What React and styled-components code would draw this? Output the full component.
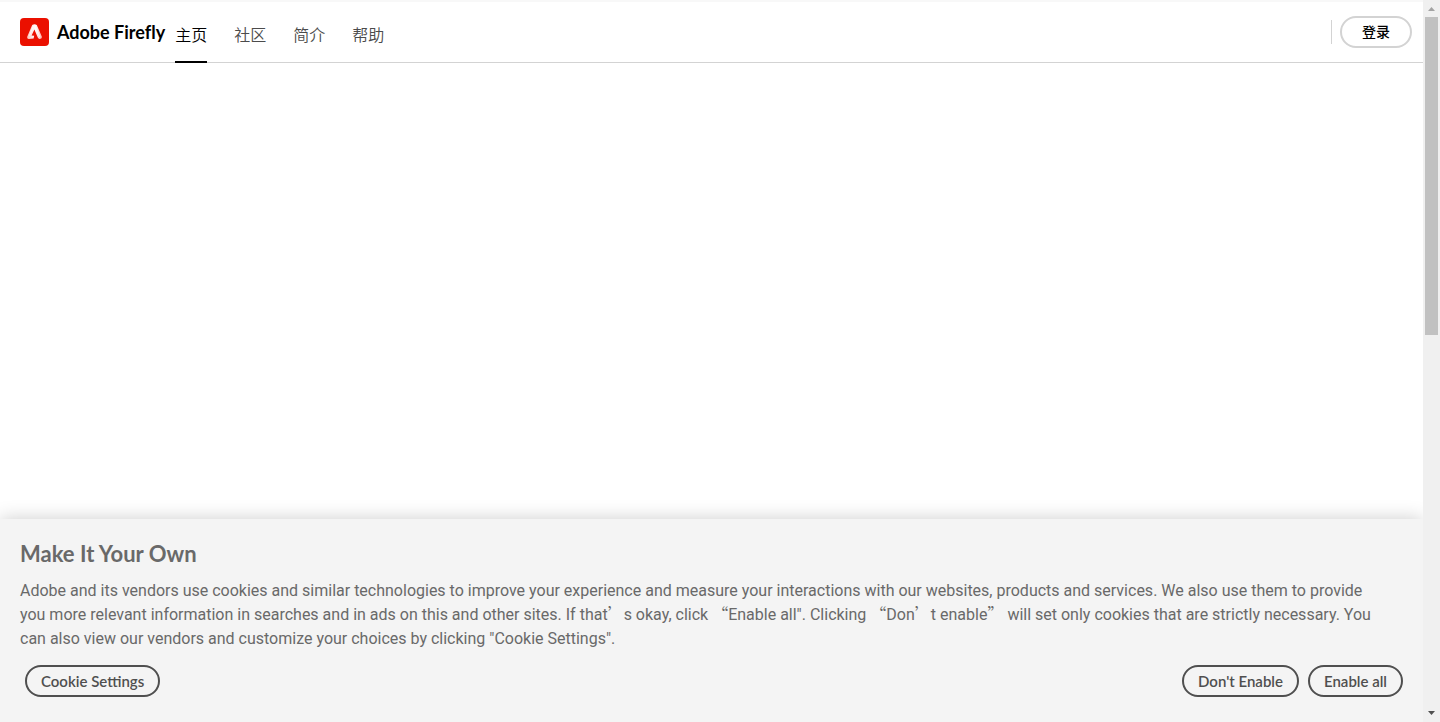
import React, { useState } from "react";
import styled, { createGlobalStyle } from "styled-components";

const COLORS = {
  black: "#000",
  line: "#d3d3d3",
  text: "#696969",
  button: "#4f4f4f",
  banner: "#f4f4f4",
  track: "#f0f0f0",
  thumb: "#c1c1c1",
};

const GlobalStyle = createGlobalStyle`
  * {
    box-sizing: border-box;
  }

  body {
    margin: 0;
    background: #fff;
    font-family: Lato, "Noto Sans CJK SC", sans-serif;
    font-variant-ligatures: none;
  }
`;

const Shell = styled.div`
  display: grid;
  grid-template-columns: 1fr 17px;
  height: 100vh;
`;

const Page = styled.div`
  display: flex;
  flex-direction: column;
  min-width: 0;
  overflow: hidden;
`;

const Header = styled.header`
  display: flex;
  justify-content: space-between;
  height: 63px;
  padding: 0 11px 0 20px;
  border-top: 2px solid #f8f8f8;
  border-bottom: 1px solid ${COLORS.line};
`;

const Group = styled.div`
  display: flex;
  align-items: center;
`;

const Brand = styled.a`
  display: flex;
  align-items: center;
  gap: 8px;
  margin-right: 10px;
  color: ${COLORS.black};
  font-size: 18px;
  font-weight: 700;
  line-height: 28px;
  text-decoration: none;
  white-space: nowrap;
`;

const Nav = styled.nav`
  display: flex;
  gap: 27px;
  align-self: stretch;
  margin-bottom: -1px;
`;

const NavItem = styled.a`
  display: flex;
  align-items: center;
  padding-top: 4px;
  border-bottom: 2px solid
    ${(props) => (props.$active ? COLORS.black : "transparent")};
  color: ${(props) => (props.$active ? COLORS.black : "#4b4b4b")};
  font-family: "Noto Sans CJK SC", sans-serif;
  font-size: 16px;
  font-weight: 350;
  text-decoration: none;
`;

const Divider = styled.span`
  width: 1px;
  height: 24px;
  margin-right: 8px;
  background: ${COLORS.line};
`;

const PillButton = styled.button`
  height: 32px;
  padding: 0 ${(props) => (props.$light ? "20px" : "14px")};
  border: 2px solid ${(props) => (props.$light ? COLORS.line : COLORS.button)};
  border-radius: 16px;
  background: transparent;
  color: ${(props) => (props.$light ? COLORS.black : COLORS.button)};
  font-family: inherit;
  font-size: ${(props) => (props.$light ? "14px" : "15px")};
  font-weight: ${(props) => (props.$light ? 500 : 600)};
  line-height: 20px;
  white-space: nowrap;
  cursor: pointer;
`;

const Content = styled.main`
  flex: 1;
`;

const Banner = styled.section`
  padding: 20px 20px 25px;
  background: ${COLORS.banner};
  box-shadow: 0 0 18px rgba(0, 0, 0, 0.2);
  color: ${COLORS.text};
`;

const BannerTitle = styled.h2`
  margin: 0 0 10px;
  font-size: 22px;
  font-weight: 700;
  line-height: 30px;
`;

const BannerText = styled.p`
  margin: 0 0 14px;
  font-family: Roboto, sans-serif;
  font-size: 16px;
  line-height: 24px;
`;

const Quote = styled.span`
  font-family: "Noto Sans CJK SC", sans-serif;
  line-height: 1;
`;

const BannerActions = styled.div`
  display: flex;
  gap: 9px;
  padding-left: 5px;

  button:first-child {
    margin-right: auto;
  }
`;

const ScrollTrack = styled.div`
  display: flex;
  flex-direction: column;
  align-items: center;
  background: ${COLORS.track};
`;

const ScrollThumb = styled.div`
  width: 13px;
  height: 44%;
  margin-bottom: auto;
  background: ${COLORS.thumb};
`;

const Arrow = styled.svg`
  display: block;
  flex: none;
  width: 17px;
  height: 17px;
  fill: ${(props) => (props.$down ? "#505050" : "#a3a3a3")};
`;

const LINKS = ["主页", "社区", "简介", "帮助"];

const Logo = () => (
  <svg width="29" height="28" viewBox="0 0 29 28" aria-hidden="true">
    <defs>
      <linearGradient id="mark" x1="0" y1="0" x2="1" y2="0">
        <stop offset="0" stopColor="#ffc2bb" />
        <stop offset="0.55" stopColor="#fff" />
        <stop offset="1" stopColor="#ffb0a8" />
      </linearGradient>
    </defs>
    <rect width="29" height="28" rx="4" fill="#eb1000" />
    <path
      d="M12.2 7 Q14.5 5.4 16.8 7 L22 19 Q21.8 21 19.6 21 Q18.4 20.9 17.8 19.6 L14.4 11.6 L11.6 17.6 L14.2 17.8 L13.6 20.6 L8.6 21 Q6.6 20.6 7.2 18.8 Z"
      fill="url(#mark)"
    />
    <path
      d="M13.4 8.4 L9.6 17.4 M15.6 9.2 L19.6 18.6"
      fill="none"
      stroke="#fff"
      strokeOpacity="0.7"
      strokeWidth="1"
      strokeLinecap="round"
    />
  </svg>
);

function App() {
  const [active, setActive] = useState(0);
  return (
    <>
      <GlobalStyle />
      <Shell>
        <Page>
          <Header>
            <Group>
              <Brand href="#">
                <Logo />
                Adobe Firefly
              </Brand>
              <Nav>
                {LINKS.map((name, i) => (
                  <NavItem
                    key={name}
                    href="#"
                    $active={i === active}
                    onClick={() => setActive(i)}
                  >
                    {name}
                  </NavItem>
                ))}
              </Nav>
            </Group>
            <Group>
              <Divider />
              <PillButton $light>登录</PillButton>
            </Group>
          </Header>
          <Content />
          <Banner>
            <BannerTitle>Make It Your Own</BannerTitle>
            <BannerText>
              Adobe and its vendors use cookies and similar technologies to
              improve your experience and measure your interactions with our
              websites, products and services. We also use them to provide
              <br />
              you more relevant information in searches and in ads on this and
              other sites. If that<Quote>’</Quote>s okay, click{" "}
              <Quote>“</Quote>Enable all". Clicking <Quote>“</Quote>Don
              <Quote>’</Quote>t enable<Quote>”</Quote> will set only cookies
              that are strictly necessary. You
              <br />
              can also view our vendors and customize your choices by clicking
              "Cookie Settings".
            </BannerText>
            <BannerActions>
              <PillButton>Cookie Settings</PillButton>
              <PillButton>Don't Enable</PillButton>
              <PillButton>Enable all</PillButton>
            </BannerActions>
          </Banner>
        </Page>
        <ScrollTrack aria-hidden="true">
          <Arrow viewBox="0 0 17 17">
            <path d="M5 11 L8.5 7 L12 11 Z" />
          </Arrow>
          <ScrollThumb />
          <Arrow $down viewBox="0 0 17 17">
            <path d="M5 6 L8.5 10 L12 6 Z" />
          </Arrow>
        </ScrollTrack>
      </Shell>
    </>
  );
}

export default App;
